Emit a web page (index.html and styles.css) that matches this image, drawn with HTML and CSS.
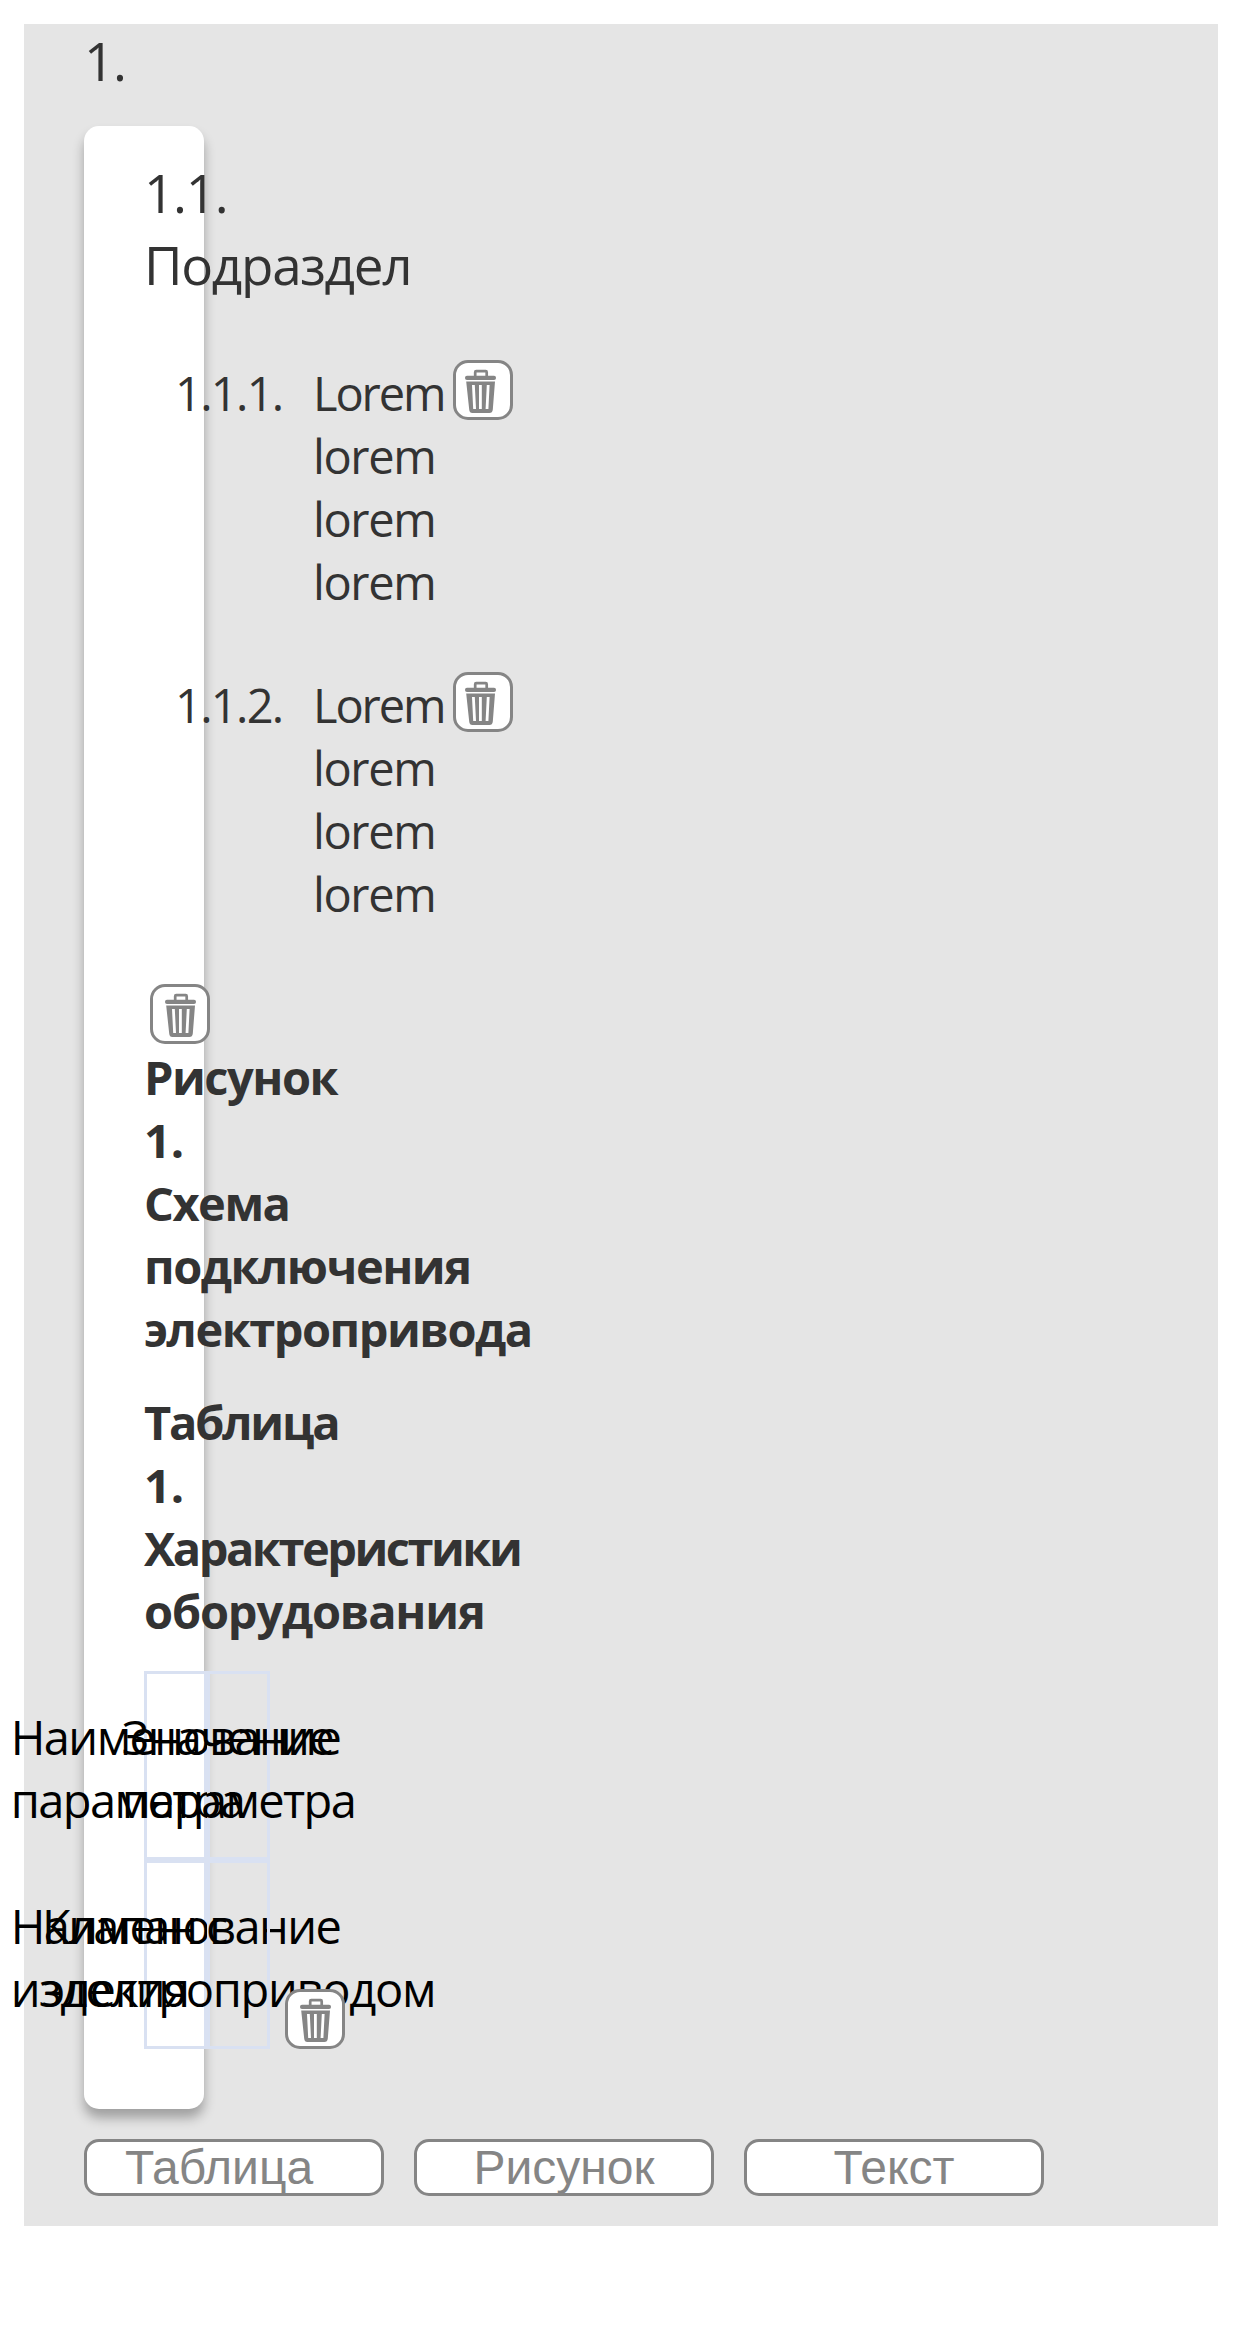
FILE: index.html
```html
<!DOCTYPE html>
<html lang="ru">
<head>
<meta charset="utf-8">
<title>Раздел</title>
<link rel="stylesheet" href="styles.css">
</head>
<body>
<svg class="sprite" aria-hidden="true">
  <symbol id="trash" viewBox="0 0 54 54">
    <path d="M19.2 13.5V9.2q0-1 1-1h9.500q1 0 1 1v4.300" fill="none" stroke="#858585" stroke-width="2.700"/>
    <rect x="9" y="12.700" width="31" height="4.300" rx="2"/>
    <path d="M10.200 18.500H39L36.800 46.500Q36.500 50 33.300 50H16.400Q13.500 50 13.200 46.500Z"/>
    <path d="M16 22h2.800l1.200 24h-2.800zM23 22h2.800v24H23zM30.800 22h2.800l-1.200 24h-2.800z" fill="#fff"/>
  </symbol>
</svg>
<main class="section">
  <h1 class="title">1.</h1>
  <article class="card">
    <h2 class="title subtitle">1.1. Подраздел</h2>
    <div class="item">
      <span class="item-number">1.1.1.</span>
      <p class="item-text"><span class="lead">Lorem</span> lorem lorem lorem</p>
      <button class="delete" aria-label="Удалить"><svg class="icon"><use href="#trash"/></svg></button>
    </div>
    <div class="item">
      <span class="item-number">1.1.2.</span>
      <p class="item-text"><span class="lead">Lorem</span> lorem lorem lorem</p>
      <button class="delete" aria-label="Удалить"><svg class="icon"><use href="#trash"/></svg></button>
    </div>
    <figure class="figure">
      <button class="delete delete-block" aria-label="Удалить"><svg class="icon"><use href="#trash"/></svg></button>
      <figcaption class="caption">Рисунок <span class="number">1.</span> Схема подключения электропривода</figcaption>
    </figure>
    <h3 class="caption table-caption"><span class="tight">Таблица</span> <span class="number">1.</span> <span class="tighter">Характеристики</span> <span class="wide">оборудования</span></h3>
    <div class="table-row">
      <div class="table">
        <div class="cell"><span class="cell-text">Наименование<br>параметра</span></div>
        <div class="cell"><span class="cell-text">Значение<br>параметра</span></div>
        <div class="cell"><span class="cell-text">Наименование<br>изделия</span></div>
        <div class="cell"><span class="cell-text"><span class="lead">Клапан с</span><br><span class="long">электроприводом</span></span></div>
      </div>
      <button class="delete delete-block" aria-label="Удалить"><svg class="icon"><use href="#trash"/></svg></button>
    </div>
  </article>
  <div class="actions">
    <button class="action action-table">Таблица</button>
    <button class="action">Рисунок</button>
    <button class="action">Текст</button>
  </div>
</main>
</body>
</html>
```
FILE: styles.css
```css
* { box-sizing: border-box; }
body { margin: 0; padding: 24px; background: #fff; font-family: "Open Sans", "Noto Sans", sans-serif; font-size: 47px; line-height: 63px; letter-spacing: -1.4px; color: #333; }
h1, h2, h3, p, figure { margin: 0; }
.sprite { display: none; }
.section { display: flex; flex-direction: column; align-items: flex-start; gap: 30px; padding: 0 60px 30px; background: #e5e5e5; }
.title { margin-bottom: -1px; padding-top: 1px; font-size: 53px; line-height: 72px; font-weight: 400; letter-spacing: -1.3px; }
.card { width: 120px; padding: 30px 0 60px 60px; background: #fff; border-radius: 15px; box-shadow: 0 9px 12px rgba(0, 0, 0, .3); }
.item { display: flex; align-items: flex-start; width: 369px; height: 252px; margin-top: 60px; padding-left: 31px; }
.item-number { flex: 0 0 138px; padding-top: 2px; letter-spacing: -1.7px; }
.item-text { flex: 0 0 140px; min-width: 0; padding-top: 2px; }
.delete { flex: none; display: block; width: 60px; height: 60px; padding: 0; background: #fff; border: 3px solid #858585; border-radius: 15px; }
.delete-block { padding-left: 3px; }
.icon { display: block; width: 54px; height: 54px; fill: #858585; overflow: visible; }
.figure { margin-top: 60px; }
.figure .delete { margin-left: 6px; }
.caption { padding-top: 2px; font-size: 47px; font-weight: 700; letter-spacing: -1.5px; }
.table-caption { margin: 28px 0; }
.number { letter-spacing: 0; }
.lead { letter-spacing: -2.1px; }
.wide { letter-spacing: -1.2px; }
.long { letter-spacing: -1.3px; }
.tight { letter-spacing: -2.2px; }
.tighter { letter-spacing: -2.5px; }
.table-row { display: flex; align-items: flex-end; gap: 15px; width: max-content; }
.table { display: grid; grid-template-columns: 63px 63px; grid-auto-rows: 189px; }
.cell { display: flex; align-items: center; justify-content: center; padding-top: 6px; border: 3px solid #d9e1f2; color: #000; letter-spacing: -1.6px; }
.cell-text { flex: none; white-space: nowrap; }
.actions { display: flex; gap: 30px; }
.action { width: 300px; height: 57px; padding: 0; background: #fff; border: 3px solid #858585; border-radius: 15px; font: 48px/51px "Liberation Sans", Arial, sans-serif; letter-spacing: 0; color: #858585; }
.action-table { padding-right: 30px; }
```
